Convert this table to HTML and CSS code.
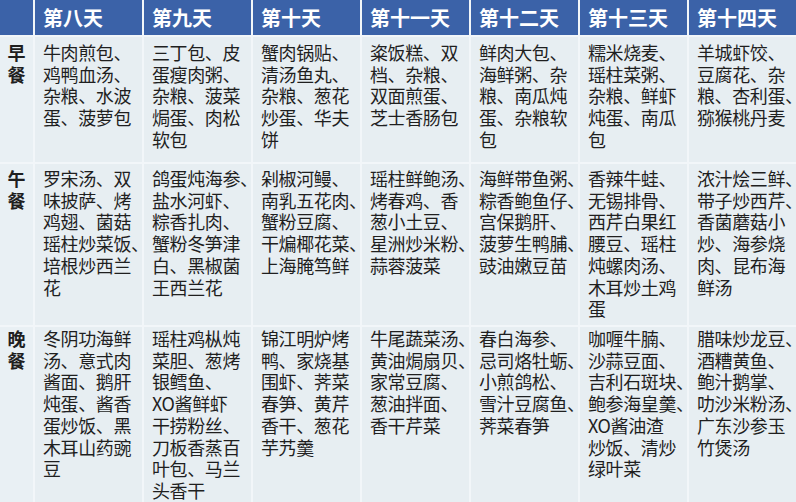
FILE: index.html
```html
<!DOCTYPE html>
<html lang="zh-CN">
<head>
<meta charset="utf-8">
<title>菜单</title>
<link rel="stylesheet" href="styles.css">
</head>
<body>
<div class="menu">
  <div class="hd corner"></div>
  <div class="hd">第八天</div>
  <div class="hd">第九天</div>
  <div class="hd">第十天</div>
  <div class="hd">第十一天</div>
  <div class="hd">第十二天</div>
  <div class="hd">第十三天</div>
  <div class="hd">第十四天</div>

  <div class="meal r1">早<br>餐</div>
  <div class="cell r1">牛肉煎包、<br>鸡鸭血汤、<br>杂粮、水波<br>蛋、菠萝包</div>
  <div class="cell r1">三丁包、皮<br>蛋瘦肉粥、<br>杂粮、菠菜<br>焗蛋、肉松<br>软包</div>
  <div class="cell r1">蟹肉锅贴、<br>清汤鱼丸、<br>杂粮、葱花<br>炒蛋、华夫<br>饼</div>
  <div class="cell r1">粢饭糕、双<br>档、杂粮、<br>双面煎蛋、<br>芝士香肠包</div>
  <div class="cell r1">鲜肉大包、<br>海鲜粥、杂<br>粮、南瓜炖<br>蛋、杂粮软<br>包</div>
  <div class="cell r1">糯米烧麦、<br>瑶柱菜粥、<br>杂粮、鲜虾<br>炖蛋、南瓜<br>包</div>
  <div class="cell r1">羊城虾饺、<br>豆腐花、杂<br>粮、杏利蛋、<br>猕猴桃丹麦</div>

  <div class="meal r2">午<br>餐</div>
  <div class="cell r2">罗宋汤、双<br>味披萨、烤<br>鸡翅、菌菇<br>瑶柱炒菜饭、<br>培根炒西兰<br>花</div>
  <div class="cell r2">鸽蛋炖海参、<br>盐水河虾、<br>粽香扎肉、<br>蟹粉冬笋津<br>白、黑椒菌<br>王西兰花</div>
  <div class="cell r2">剁椒河鳗、<br>南乳五花肉、<br>蟹粉豆腐、<br>干煸椰花菜、<br>上海腌笃鲜</div>
  <div class="cell r2">瑶柱鲜鲍汤、<br>烤春鸡、香<br>葱小土豆、<br>星洲炒米粉、<br>蒜蓉菠菜</div>
  <div class="cell r2">海鲜带鱼粥、<br>粽香鲍鱼仔、<br>宫保鹅肝、<br>菠萝生鸭脯、<br>豉油嫩豆苗</div>
  <div class="cell r2">香辣牛蛙、<br>无锡排骨、<br>西芹白果红<br>腰豆、瑶柱<br>炖螺肉汤、<br>木耳炒土鸡<br>蛋</div>
  <div class="cell r2">浓汁烩三鲜、<br>带子炒西芹、<br>香菌蘑菇小<br>炒、海参烧<br>肉、昆布海<br>鲜汤</div>

  <div class="meal r3">晚<br>餐</div>
  <div class="cell r3">冬阴功海鲜<br>汤、意式肉<br>酱面、鹅肝<br>炖蛋、酱香<br>蛋炒饭、黑<br>木耳山药豌<br>豆</div>
  <div class="cell r3">瑶柱鸡枞炖<br>菜胆、葱烤<br>银鳕鱼、<br>XO酱鲜虾<br>干捞粉丝、<br>刀板香蒸百<br>叶包、马兰<br>头香干</div>
  <div class="cell r3">锦江明炉烤<br>鸭、家烧基<br>围虾、荠菜<br>春笋、黄芹<br>香干、葱花<br>芋艿羹</div>
  <div class="cell r3">牛尾蔬菜汤、<br>黄油焗扇贝、<br>家常豆腐、<br>葱油拌面、<br>香干芹菜</div>
  <div class="cell r3">春白海参、<br>忌司烙牡蛎、<br>小煎鸽松、<br>雪汁豆腐鱼、<br>荠菜春笋</div>
  <div class="cell r3">咖喱牛腩、<br>沙蒜豆面、<br>吉利石斑块、<br>鲍参海皇羹、<br>XO酱油渣<br>炒饭、清炒<br>绿叶菜</div>
  <div class="cell r3">腊味炒龙豆、<br>酒糟黄鱼、<br>鲍汁鹅掌、<br>叻沙米粉汤、<br>广东沙参玉<br>竹煲汤</div>
</div>
</body>
</html>
```

FILE: styles.css
```css
html, body {
  margin: 0;
  padding: 0;
  width: 796px;
  height: 502px;
  overflow: hidden;
  background: #f3f7f9;
}

.menu {
  display: grid;
  grid-template-columns: 33px repeat(7, minmax(0, 1fr));
  grid-template-rows: 35px 125px 161px minmax(0, 1fr);
  gap: 2px;
  width: 796px;
  height: 502px;
  overflow: hidden;
  background: #f2f6f9;
  font-family: "Noto Sans CJK SC", "Noto Sans", sans-serif;
  color: #1f1f1f;
}

.hd {
  background: #3b62a8;
  color: #ffffff;
  font-weight: 700;
  font-size: 20px;
  display: flex;
  align-items: center;
  padding-left: 8px;
  white-space: nowrap;
  overflow: hidden;
  min-width: 0;
}

.hd.corner {
  padding: 0;
}

.cell {
  background: #e7eef2;
  font-size: 18px;
  line-height: 21.7px;
  padding-left: 8px;
  white-space: nowrap;
  overflow: visible;
  min-width: 0;
  letter-spacing: -0.4px;
}

.meal {
  background: #e9f0f4;
  font-size: 18px;
  line-height: 21.7px;
  font-weight: 700;
  text-align: center;
  min-width: 0;
}

.r1 { padding-top: 5px; }
.r2 { padding-top: 4px; }
.r3 { padding-top: 1px; }
```
